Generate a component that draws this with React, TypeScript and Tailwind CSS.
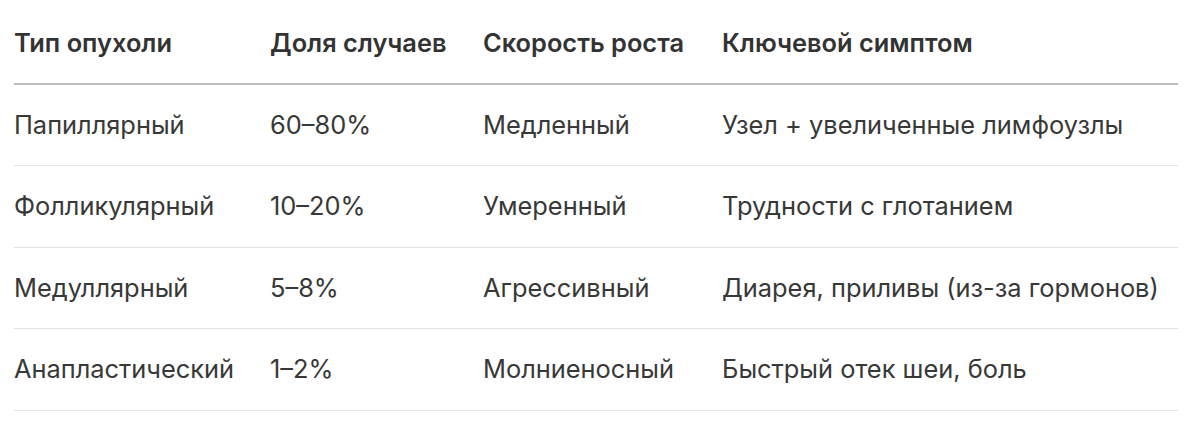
import React from 'react';

const rows = [
  ['Папиллярный', '60–80%', 'Медленный', 'Узел + увеличенные лимфоузлы'],
  ['Фолликулярный', '10–20%', 'Умеренный', 'Трудности с глотанием'],
  ['Медуллярный', '5–8%', 'Агрессивный', 'Диарея, приливы (из-за гормонов)'],
  ['Анапластический', '1–2%', 'Молниеносный', 'Быстрый отек шеи, боль'],
];

const headers = ['Тип опухоли', 'Доля случаев', 'Скорость роста', 'Ключевой симптом'];

export default function App() {
  return (
    <div className="bg-white w-[1200px] h-[421px] pl-[14px] pr-[22px]" style={{ fontFamily: 'Inter, "Liberation Sans", sans-serif' }}>
      <table className="w-full border-collapse text-left text-[25.4px] text-[#383838]">
        <colgroup>
          <col className="w-[256px]" />
          <col className="w-[213px]" />
          <col className="w-[239px]" />
          <col />
        </colgroup>
        <thead>
          <tr className="border-b-[2px] border-[#bdbdbd]">
            {headers.map((h) => (
              <th key={h} className="h-[84px] p-0 align-middle font-semibold text-[#333] pt-[4px]">
                {h}
              </th>
            ))}
          </tr>
        </thead>
        <tbody>
          {rows.map((r) => (
            <tr key={r[0]} className="border-b border-[#e3e3e3]">
              {r.map((c) => (
                <td key={c} className="h-[81.5px] p-0 align-middle">
                  {c}
                </td>
              ))}
            </tr>
          ))}
        </tbody>
      </table>
    </div>
  );
}
